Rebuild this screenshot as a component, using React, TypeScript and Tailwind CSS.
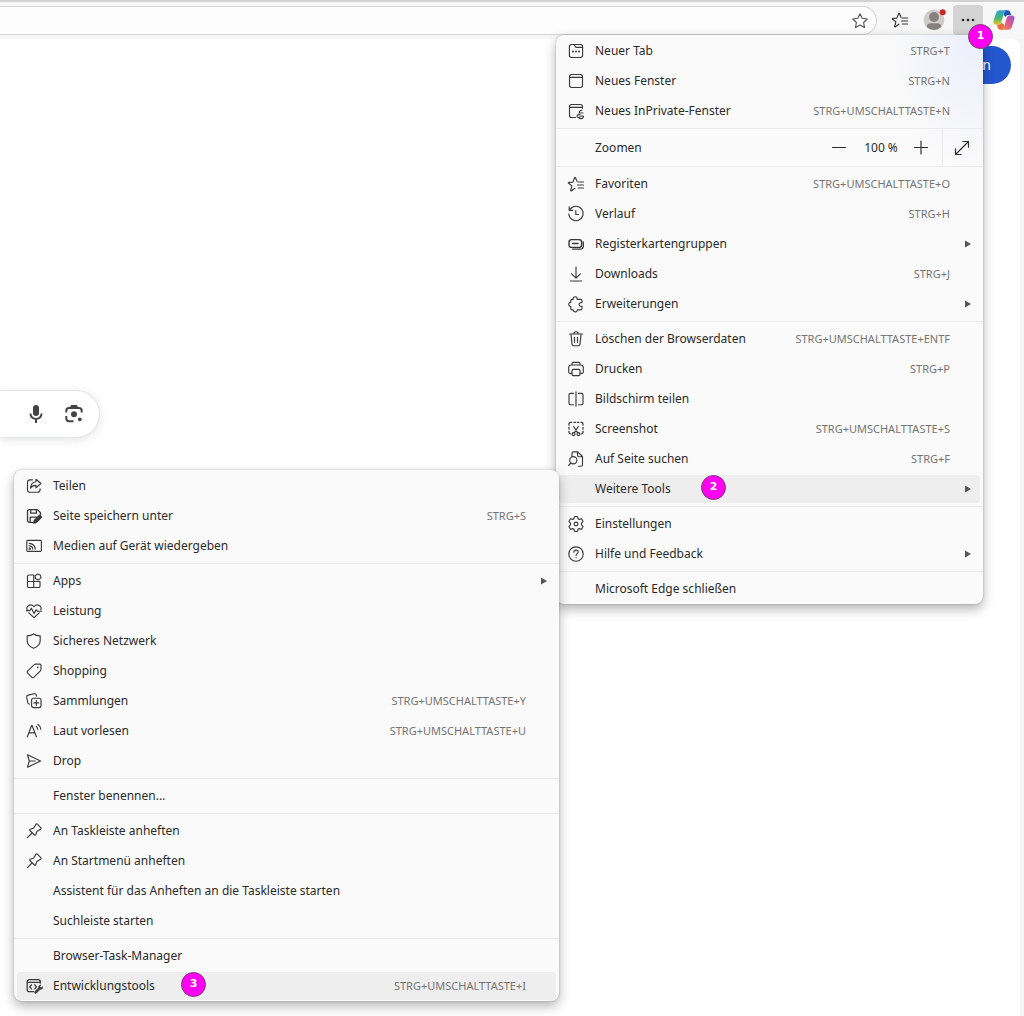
import React from 'react'

type IconProps = {
    children: React.ReactNode;
}

type Item = {
    label: string;
    icon?: React.ReactNode;
    keys?: string;
    submenu?: boolean;
    active?: boolean;
}

// 20px line icon used in both menus and the toolbar
const Icon = ({children}: IconProps) => (
    <svg
        className="size-5 shrink-0"
        viewBox="0 0 20 20"
        fill="none"
        stroke="currentColor"
        strokeWidth="1.15"
        strokeLinecap="round"
        strokeLinejoin="round"
        aria-hidden="true"
    >
        {children}
    </svg>
)

const starPath = 'M8.9 14.2 5.3 16.7c-.4.3-.8 0-.7-.4l1.3-4.4L2.6 9.2c-.4-.3-.2-.8.2-.8l4.1-.3L8.6 3.700c.2-.4.7-.4.9 0l1.500 3.700'

const icons = {
    tab: <Icon><rect x="3.4" y="3.5" width="13.2" height="13" rx="2.2" /><path d="M8.200 3.700l1.200 2c.2.400.5.600 1 .6h6.200" /><path d="M7 10.500h.01M10 10.500h.01M13 10.500h.01" strokeWidth="1.900" /></Icon>,
    window: <Icon><rect x="3.5" y="3.5" width="13" height="13" rx="2.2" /><path d="M3.5 6.4h13" /></Icon>,
    inPrivate: <Icon><path d="M9.5 16.5H5.6c-1.2 0-2.1-.9-2.1-2.1V5.6c0-1.2.9-2.1 2.1-2.1h8.800c1.200 0 2.100.9 2.100 2.100v1.600M3.500 6.400h13" /><path d="M15.8 9.2c-1.6.2-2.6 1.2-2.5 2.500M13 12h4M14 13.700c-1.800-.4-3 .3-3 1.400 0 1.200 1.500 1.800 3 1.200M14 15h3.400c.3 1.600-.7 2.600-2.400 2.600-.8 0-1.400-.2-1.800-.5" /></Icon>,
    favorites: <Icon><path d={starPath} /><path d="M12.200 8h5.300M11.500 11h6M12.200 14h5.300" /></Icon>,
    history: <Icon><path d="M4.2 5.2A7.2 7.2 0 1 1 2.800 10M3.200 2.800v3.500h3.500M9.800 6.600v3.900h2.800" /></Icon>,
    groups: <Icon><rect x="3" y="5.6" width="12.600" height="7.800" rx="2.400" strokeWidth="1.400" /><path d="M6.500 9.500h5.500" strokeWidth="1.300" /><path d="M17.300 7.800v4.100c0 2-1.400 3.200-3.200 3.200H6.400" strokeWidth="1.300" /></Icon>,
    download: <Icon><path d="M10 3v11M5.600 9.800 10 14.200l4.400-4.400M4.500 17h11" /></Icon>,
    extension: <Icon><path d="M7.1 5.3c-.2-1.500.8-2.600 2.100-2.600s2.200 1.100 2 2.600h3.600c.7 0 1.200.5 1.200 1.200v2.100c-1.600-.3-2.900.5-2.900 1.800s1.300 2.100 2.900 1.800v2.500c0 .7-.5 1.200-1.200 1.200h-3.500c.1 1.200-.8 2-2 2s-2.200-.8-2.100-2H6c-.7 0-1.200-.5-1.200-1.200v-2.300c-1.200.1-2-.8-2-2s.8-2.100 2-2V6.500c0-.7.5-1.200 1.200-1.200Z" /></Icon>,
    trash: <Icon><path d="M3.700 5h12.600M7.800 4.800c0-2.800 4.400-2.800 4.400 0M5 5.200l1 9.900c.1 1 .8 1.600 1.800 1.600h4.400c1 0 1.700-.6 1.800-1.600l1-9.900M8.500 8.200v5M11.500 8.200v5" /></Icon>,
    print: <Icon><path d="M6 6V4.800c0-.8.6-1.400 1.400-1.400h5.200c.8 0 1.400.6 1.400 1.400V6M5.800 14.400H4.200c-.9 0-1.500-.6-1.500-1.500V8.600C2.700 7.200 3.800 6 5.300 6h9.400c1.500 0 2.600 1.200 2.600 2.600v4.300c0 .9-.6 1.500-1.500 1.500h-1.600" /><rect x="6" y="10.400" width="8" height="6.200" rx="1.300" /></Icon>,
    split: <Icon><path d="M10 2.800v14.400M7.600 4.300H4.400c-.8 0-1.400.6-1.400 1.400v8.600c0 .8.6 1.400 1.400 1.400h3.200M12.400 4.300h3.200c.8 0 1.400.6 1.400 1.400v8.600c0 .8-.6 1.400-1.400 1.400h-3.200" /></Icon>,
    screenshot: <Icon><path d="M3 6V5c0-1 .7-1.700 1.700-1.700h.8M8 3.300h1.500M11.300 3.300h1.500M15 3.300h.4c1 0 1.600.7 1.600 1.700v1M17 8.300v1.600M17 12.200v1c0 .9-.5 1.500-1.400 1.700M3 8.300v1.600M3 12.200v1c0 .9.500 1.500 1.400 1.700" strokeWidth="1.300" /><path d="m7.700 7.500 4 6.400M12.300 7.500l-4 6.400" /><circle cx="7.500" cy="15.100" r="1.500" /><circle cx="12.500" cy="15.100" r="1.500" /></Icon>,
    find: <Icon><path d="M6 7.400V4.300c0-.9.6-1.500 1.500-1.500h4.200l4.800 4.700v8.200c0 .9-.6 1.500-1.500 1.500h-2.500M11.500 3.100v3.100c0 .9.6 1.500 1.500 1.500h3.200" /><circle cx="7.300" cy="11.200" r="3.600" /><path d="m4.900 13.900-2.300 2.600" /></Icon>,
    settings: <Icon><path d="M8.400 2.700c1-.2 2.200-.2 3.200 0l.4 2 1.200.7 2.100-.7c.8.800 1.400 1.800 1.700 2.900l-1.500 1.500v1.800l1.500 1.500c-.3 1.100-.9 2.100-1.700 2.900l-2.100-.7-1.200.7-.4 2c-1 .2-2.200.2-3.200 0l-.4-2-1.200-.7-2.100.7c-.8-.8-1.400-1.800-1.700-2.900l1.500-1.500V9.100L3 7.600c.3-1.100.9-2.100 1.700-2.900l2.100.7L8 4.700Z" /><circle cx="10" cy="10" r="1.900" /></Icon>,
    help: <Icon><circle cx="10" cy="10" r="7.200" /><path d="M7.900 8.200c0-2.800 4.300-2.800 4.300-.2 0 1.500-2.100 1.700-2.100 3.400M10.100 13.600v.1" /></Icon>,
    share: <Icon><path d="M8.500 3.800H6c-1.500 0-2.500 1-2.500 2.500v7.400c0 1.500 1 2.500 2.500 2.500h7.600c1.500 0 2.500-1 2.500-2.500v-.9" /><path d="M12 3.200 17 7.500l-5 4.300V9.400c-2.600-.1-4.300.8-5.400 2.900.1-3.800 2-6.200 5.400-6.600Z" /></Icon>,
    save: <Icon><path d="M9 16.400H5.300c-1 0-1.800-.8-1.800-1.800V5.400c0-1 .8-1.800 1.800-1.800h8l3.200 3.200v1.800M6.700 3.800v3.400h5.700V3.800M6.200 16.200v-5.100h6.400" strokeWidth="1.300" /><path d="m15.600 9.400 1.700 1.700-5 5.100-2.400.7.600-2.400Z" fill="currentColor" strokeWidth="1.700" /></Icon>,
    cast: <Icon><rect x="2.800" y="4.300" width="14.600" height="11" rx="1" /><path d="M5.200 7.300c3.400 0 6 2.500 6 5.800M5.200 9.800c2 0 3.500 1.500 3.500 3.300M5.200 12v1.200h1.200C6.400 12.400 5.900 12 5.200 12Z" /></Icon>,
    apps: <Icon><path d="M9.700 4H4.800C4 4 3.500 4.500 3.500 5.300v9.900c0 .8.500 1.300 1.300 1.300h9.900c.8 0 1.300-.5 1.300-1.300v-4.700H3.500M9.700 4v12.500" /><path d="m13.700 2.900 2.700 1.300.6 2.700-2.800 2.200-2.700-1.500-.4-2.800Z" /></Icon>,
    health: <Icon><path d="M3.200 9C1.600 4.800 6.700 2.200 10 5.600c3.300-3.400 8.400-.8 6.800 3.400M4.800 11.800 10 16.700l5.200-4.900" /><path d="M2.500 9.600h3.300l1.600-2.400 2.700 5.400 2-3.900 1.100 1.500h4.300" /></Icon>,
    shield: <Icon><path d="M9.600 2.900C7.900 4 5.900 4.700 3.200 4.900v4.500c0 3.600 2.200 6.200 6.400 7.800 4.200-1.600 6.600-4.200 6.600-7.800V4.900c-2.500-.2-4.900-.9-6.600-2Z" /></Icon>,
    tag: <Icon><path d="M10.300 3.700c.4-.4.900-.6 1.500-.6h3.900c.7 0 1.300.6 1.300 1.300v3.900c0 .6-.2 1.100-.6 1.500l-6.700 6.500c-.5.500-1.300.5-1.800 0l-4.400-4.400c-.5-.5-.5-1.300 0-1.800Z" /><path d="M13.800 6.300h.01" strokeWidth="1.800" /></Icon>,
    collections: <Icon><rect x="7.600" y="7.200" width="9.400" height="9.400" rx="2" /><path d="M12.300 9.500v4.800M9.900 11.900h4.800M5.300 13.100c-.8-.1-1.300-.7-1.500-1.500L2.700 6.400c-.2-1.100.4-2 1.400-2.300l6-1.300c1.100-.2 2 .4 2.200 1.400l.2.900" /></Icon>,
    readAloud: <Icon><path d="M3.300 15.800 7.600 4.500h.5l4.300 11.300M4.800 11.900h6.100" /><path d="M12.200 5.300c.8.700 1.300 1.700 1.400 2.900M13.900 3.300c1.700 1.200 2.800 2.900 2.900 5" /></Icon>,
    send: <Icon><path d="M3.500 3.800 16.600 10 3.500 16.200 5.300 10ZM5.400 10h5.800" /></Icon>,
    pin: <Icon><path d="M12 3.200c.5-.5 1.200-.4 1.600.1l3.200 3.400c.4.500.3 1.200-.2 1.500l-3.500 2c-.2.100-.3.300-.4.500l-1 3c-.2.500-.8.700-1.200.3L5.900 9.500c-.4-.4-.2-1 .3-1.200l3-1c.2-.1.400-.2.500-.4ZM8 12l-4.600 4.600" /></Icon>,
    devTools: <Icon><path d="M9.500 15.700H5.400c-1.300 0-2.200-.9-2.200-2.200V5.800c0-1.300.9-2.200 2.200-2.200h8.700c1.300 0 2.200.9 2.200 2.200v1.400M3.200 6.300h13.100M7.500 8.800 5.800 10.800l1.700 2M10.800 8.800l1.600 2-1.600 2" strokeWidth="1.300" /><path d="M16.600 9c-1.600.2-2.500 1.500-2 2.900L10.900 15.500c-.9 1.100.5 2.500 1.600 1.600l3.700-3.900c1.500.3 2.700-.7 2.500-2.300l-1.700.8-1-1Z" fill="currentColor" strokeWidth=".6" /></Icon>,
}

const mainMenu: Item[][] = [
    [
        { label: 'Neuer Tab', icon: icons.tab, keys: 'STRG+T' },
        { label: 'Neues Fenster', icon: icons.window, keys: 'STRG+N' },
        { label: 'Neues InPrivate-Fenster', icon: icons.inPrivate, keys: 'STRG+UMSCHALTTASTE+N' },
    ],
    [
        { label: 'Favoriten', icon: icons.favorites, keys: 'STRG+UMSCHALTTASTE+O' },
        { label: 'Verlauf', icon: icons.history, keys: 'STRG+H' },
        { label: 'Registerkartengruppen', icon: icons.groups, submenu: true },
        { label: 'Downloads', icon: icons.download, keys: 'STRG+J' },
        { label: 'Erweiterungen', icon: icons.extension, submenu: true },
    ],
    [
        { label: 'Löschen der Browserdaten', icon: icons.trash, keys: 'STRG+UMSCHALTTASTE+ENTF' },
        { label: 'Drucken', icon: icons.print, keys: 'STRG+P' },
        { label: 'Bildschirm teilen', icon: icons.split },
        { label: 'Screenshot', icon: icons.screenshot, keys: 'STRG+UMSCHALTTASTE+S' },
        { label: 'Auf Seite suchen', icon: icons.find, keys: 'STRG+F' },
        { label: 'Weitere Tools', submenu: true, active: true },
    ],
    [
        { label: 'Einstellungen', icon: icons.settings },
        { label: 'Hilfe und Feedback', icon: icons.help, submenu: true },
    ],
    [{ label: 'Microsoft Edge schließen' }],
]

const toolsMenu: Item[][] = [
    [
        { label: 'Teilen', icon: icons.share },
        { label: 'Seite speichern unter', icon: icons.save, keys: 'STRG+S' },
        { label: 'Medien auf Gerät wiedergeben', icon: icons.cast },
    ],
    [
        { label: 'Apps', icon: icons.apps, submenu: true },
        { label: 'Leistung', icon: icons.health },
        { label: 'Sicheres Netzwerk', icon: icons.shield },
        { label: 'Shopping', icon: icons.tag },
        { label: 'Sammlungen', icon: icons.collections, keys: 'STRG+UMSCHALTTASTE+Y' },
        { label: 'Laut vorlesen', icon: icons.readAloud, keys: 'STRG+UMSCHALTTASTE+U' },
        { label: 'Drop', icon: icons.send },
    ],
    [{ label: 'Fenster benennen...' }],
    [
        { label: 'An Taskleiste anheften', icon: icons.pin },
        { label: 'An Startmenü anheften', icon: icons.pin },
        { label: 'Assistent für das Anheften an die Taskleiste starten' },
        { label: 'Suchleiste starten' },
    ],
    [
        { label: 'Browser-Task-Manager' },
        { label: 'Entwicklungstools', icon: icons.devTools, keys: 'STRG+UMSCHALTTASTE+I', active: true },
    ],
]

const Badge = ({value}: {value: string}) => (
    <span className="flex size-[25px] items-center justify-center rounded-full border border-[#7a3a78] bg-[#ff00f0] font-['DejaVu_Sans',sans-serif] text-[11px] font-bold text-white">
        {value}
    </span>
)

const Separator = () => <li role="separator" className="my-0.5 h-px bg-[#ececec]" />

const MenuItem = ({label, icon, keys, submenu, active}: Item) => (
    <li role="none" className="px-[3px] py-px">
        <button
            type="button"
            role="menuitem"
            className={`flex h-7 w-full items-center rounded pr-[9px] pl-[7px] text-left ${active ? 'bg-[#eeeeee]' : ''}`}
        >
            <span className="mr-[9px] size-5 shrink-0 text-[#3a3a3a]">{icon}</span>
            <span className="whitespace-nowrap">{label}</span>
            <span className="ml-auto text-[11px] whitespace-nowrap text-[#757575]">{keys}</span>
            <span className="ml-[15px] w-1.5 shrink-0">
                {submenu && (
                    <svg className="h-2 w-1.5" viewBox="0 0 6 8" fill="#555" aria-hidden="true"><path d="M0 0.5l6 3.500-6 3.500Z" /></svg>
                )}
            </span>
        </button>
    </li>
)

const ZoomRow = () => (
    <li role="none" className="-my-0.5 flex h-[37px] items-center pr-[3px] pl-[39px]">
        <span className="flex-1">Zoomen</span>
        <button type="button" aria-label="Verkleinern" className="flex h-7 w-8 items-center justify-center">
            <Icon><path d="M3.5 9.5h13" /></Icon>
        </button>
        <span className="w-[52px] text-center">100 %</span>
        <button type="button" aria-label="Vergrößern" className="flex h-7 w-7 items-center justify-center">
            <Icon><path d="M3.5 9.5h13M10 3v13" /></Icon>
        </button>
        <button type="button" aria-label="Vollbild" className="ml-[7px] flex h-full w-[38px] items-center justify-center border-l border-[#ececec]">
            <Icon><path d="M3.5 16.5l13-13M10.800 3.500h5.700v5.700M3.500 10.800v5.700h5.700" /></Icon>
        </button>
    </li>
)

const Menu = ({groups, zoom}: {groups: Item[][]; zoom?: boolean}) => (
    <ul role="menu" className="pt-px text-xs text-[#2b2b2b]">
        {groups.map((group, i) => (
            <React.Fragment key={i}>
                {i > 0 && <Separator />}
                {zoom && i === 1 && (
                    <>
                        <ZoomRow />
                        <Separator />
                    </>
                )}
                {group.map((item) => <MenuItem key={item.label} {...item} />)}
            </React.Fragment>
        ))}
    </ul>
)

const Toolbar = () => (
    <header className="flex h-[39px] items-start border-t-2 border-[#d2d2d2] bg-[#f7f7f7] text-[#333]">
        <form className="mt-1 mr-1.5 flex h-[29px] flex-1 items-center rounded-r-full border border-l-0 border-[#d4d4d4] bg-[#fdfdfd] pr-1.5">
            <input type="text" aria-label="Adressleiste" className="h-full min-w-0 flex-1 bg-transparent px-3 text-sm outline-none" />
            <button type="button" aria-label="Zu Favoriten hinzufügen" className="text-[#555]">
                <Icon><path d="m10 2.700 2.200 4.600 5 .7-3.600 3.500.9 5-4.500-2.400-4.500 2.400.9-5L2.800 8l5-.7Z" /></Icon>
            </button>
        </form>
        <button type="button" aria-label="Favoriten" className="flex h-9 w-[34px] items-center justify-center">{icons.favorites}</button>
        <button type="button" aria-label="Profil" className="flex h-9 w-[34px] items-center justify-center">
            <svg className="size-6" viewBox="0 0 24 24" aria-hidden="true">
                <circle cx="12" cy="12" r="10.400" fill="#cfcccb" />
                <circle cx="12" cy="9" r="4.900" fill="#86807e" />
                <path d="M4.600 18.600c.5-2.600 2-3.400 4-3.400h6.800c2 0 3.500.8 4 3.400a10 10 0 0 1-14.800 0Z" fill="#86807e" />
                <circle cx="20.700" cy="4.300" r="3" fill="#c8281e" />
            </svg>
        </button>
        <button type="button" aria-label="Einstellungen und mehr" className="mt-[3px] ml-0.5 flex h-[30px] w-[30px] items-center justify-center rounded bg-[#d4d4d4]">
            <svg className="size-4" viewBox="0 0 16 16" fill="#222" aria-hidden="true">
                <circle cx="3" cy="8" r="1.300" /><circle cx="8" cy="8" r="1.300" /><circle cx="13" cy="8" r="1.300" />
            </svg>
        </button>
        <button type="button" aria-label="Copilot" className="flex h-9 w-[41px] items-center justify-center">
            <svg className="size-[22px]" viewBox="0 0 22 22" aria-hidden="true">
                <defs>
                    <linearGradient id="cpLeft" x1="0" y1="0" x2="0" y2="1">
                        <stop offset="0" stopColor="#2aa5dc" /><stop offset=".55" stopColor="#45b56c" /><stop offset="1" stopColor="#e8c52c" />
                    </linearGradient>
                    <linearGradient id="cpRight" x1="1" y1="0" x2="0" y2="1">
                        <stop offset="0" stopColor="#9155d8" /><stop offset=".5" stopColor="#dc5a90" /><stop offset="1" stopColor="#f28b4c" />
                    </linearGradient>
                </defs>
                <path d="M12 1.200h2.600c1.500 0 2.300.9 2.700 2.200l.9 2.700h-2.700c-1.500 0-2.200.6-2.700 2L10.500 6Z" fill="#2253bd" />
                <path d="M6.800 1.200h6.400c-1.300.3-1.800 1.300-2.300 2.900L8.300 13c-.5 1.700-1.300 2.600-3 2.600H3.200c-2.300 0-3.200-1.600-2.600-3.700l2.500-8C3.700 2.100 4.900 1.200 6.800 1.200Z" fill="url(#cpLeft)" />
                <path d="M10 20.800H7.600c-1.600 0-2.300-.8-2.800-2.200l-1-3h2c1.400 0 2.200-.8 2.600-2.200l3 2.600Z" fill="#ec6b3f" />
                <path d="M15.200 20.800H8.800c1.300-.3 1.800-1.300 2.300-2.900L13.700 9c.5-1.700 1.300-2.600 3-2.600h2.100c2.300 0 3.200 1.600 2.600 3.700l-2.500 8c-.6 1.800-1.800 2.700-3.700 2.700Z" fill="url(#cpRight)" />
            </svg>
        </button>
    </header>
)

const Page = () => (
    <main className="mr-1 flex flex-1 flex-col rounded-tr-lg bg-white">
        <div className="flex justify-end pt-[7px] pr-[9px]">
            <a href="#" aria-label="Anmelden" className="flex h-[38px] w-24 items-center justify-end rounded-full bg-[#2457cf] px-5 text-sm text-white">n</a>
        </div>
        <form className="mt-[306px] flex h-12 w-[100px] items-center rounded-r-full border border-l-0 border-[#e6e6e6] bg-white pr-[13px] text-[#444] shadow-[0_2px_8px_rgba(60,64,67,0.15)]">
            <input type="text" aria-label="Suche" className="h-full min-w-0 flex-1 bg-transparent outline-none" />
            <button type="button" aria-label="Sprachsuche" className="mr-3.5">
                <svg className="size-6" viewBox="0 0 24 24" fill="currentColor" aria-hidden="true">
                    <rect x="9" y="3" width="6" height="11" rx="3" />
                    <path d="M5.500 11.500h1.900a4.600 4.600 0 0 0 9.200 0h1.900a6.500 6.500 0 0 1-5.500 6.300V21h-2v-3.200a6.500 6.500 0 0 1-5.500-6.300Z" />
                </svg>
            </button>
            <button type="button" aria-label="Bildersuche">
                <svg className="size-6" viewBox="0 0 24 24" fill="none" stroke="currentColor" strokeWidth="2" aria-hidden="true">
                    <path d="M4.300 10.500V8.800c0-1.700 1-2.700 2.700-2.700h10c1.700 0 2.700 1 2.700 2.700v1.700M4.300 14v2.500c0 1.700 1 2.700 2.700 2.700h4.500" />
                    <path d="M9 5.300 9.700 4h4.600L15 5.300" />
                    <circle cx="12" cy="12.300" r="3" fill="currentColor" stroke="none" />
                    <circle cx="17.800" cy="17.300" r="1.900" fill="currentColor" stroke="none" />
                </svg>
            </button>
        </form>
    </main>
)

const App = () => {
  return (
    <div className="relative flex min-h-screen flex-col overflow-hidden bg-[#f5f5f5] font-['Noto_Sans',sans-serif]">
        <Toolbar />
        <Page />
        <div className="absolute top-[35px] right-[41px] w-[427px] rounded-lg bg-[#fafafa] bg-[radial-gradient(ellipse_at_top_right,#eaeefb_0,#fafafa_100px)] shadow-[0_0_2px_rgba(0,0,0,0.25),0_5px_12px_rgba(0,0,0,0.3)]">
            <Menu groups={mainMenu} zoom />
        </div>
        <div className="absolute top-[470px] right-[465px] w-[545px] rounded-lg bg-[#fafafa] shadow-[0_0_2px_rgba(0,0,0,0.25),0_5px_12px_rgba(0,0,0,0.3)]">
            <Menu groups={toolsMenu} />
        </div>
        {/* numbered steps on top of the menus */}
        <div className="absolute top-6 right-[31px]">
            <Badge value="1" />
        </div>
        <div className="absolute top-[475px] right-[298px]">
            <Badge value="2" />
        </div>
        <div className="absolute top-[972px] right-[818px]">
            <Badge value="3" />
        </div>
    </div>
  )
}

export default App
